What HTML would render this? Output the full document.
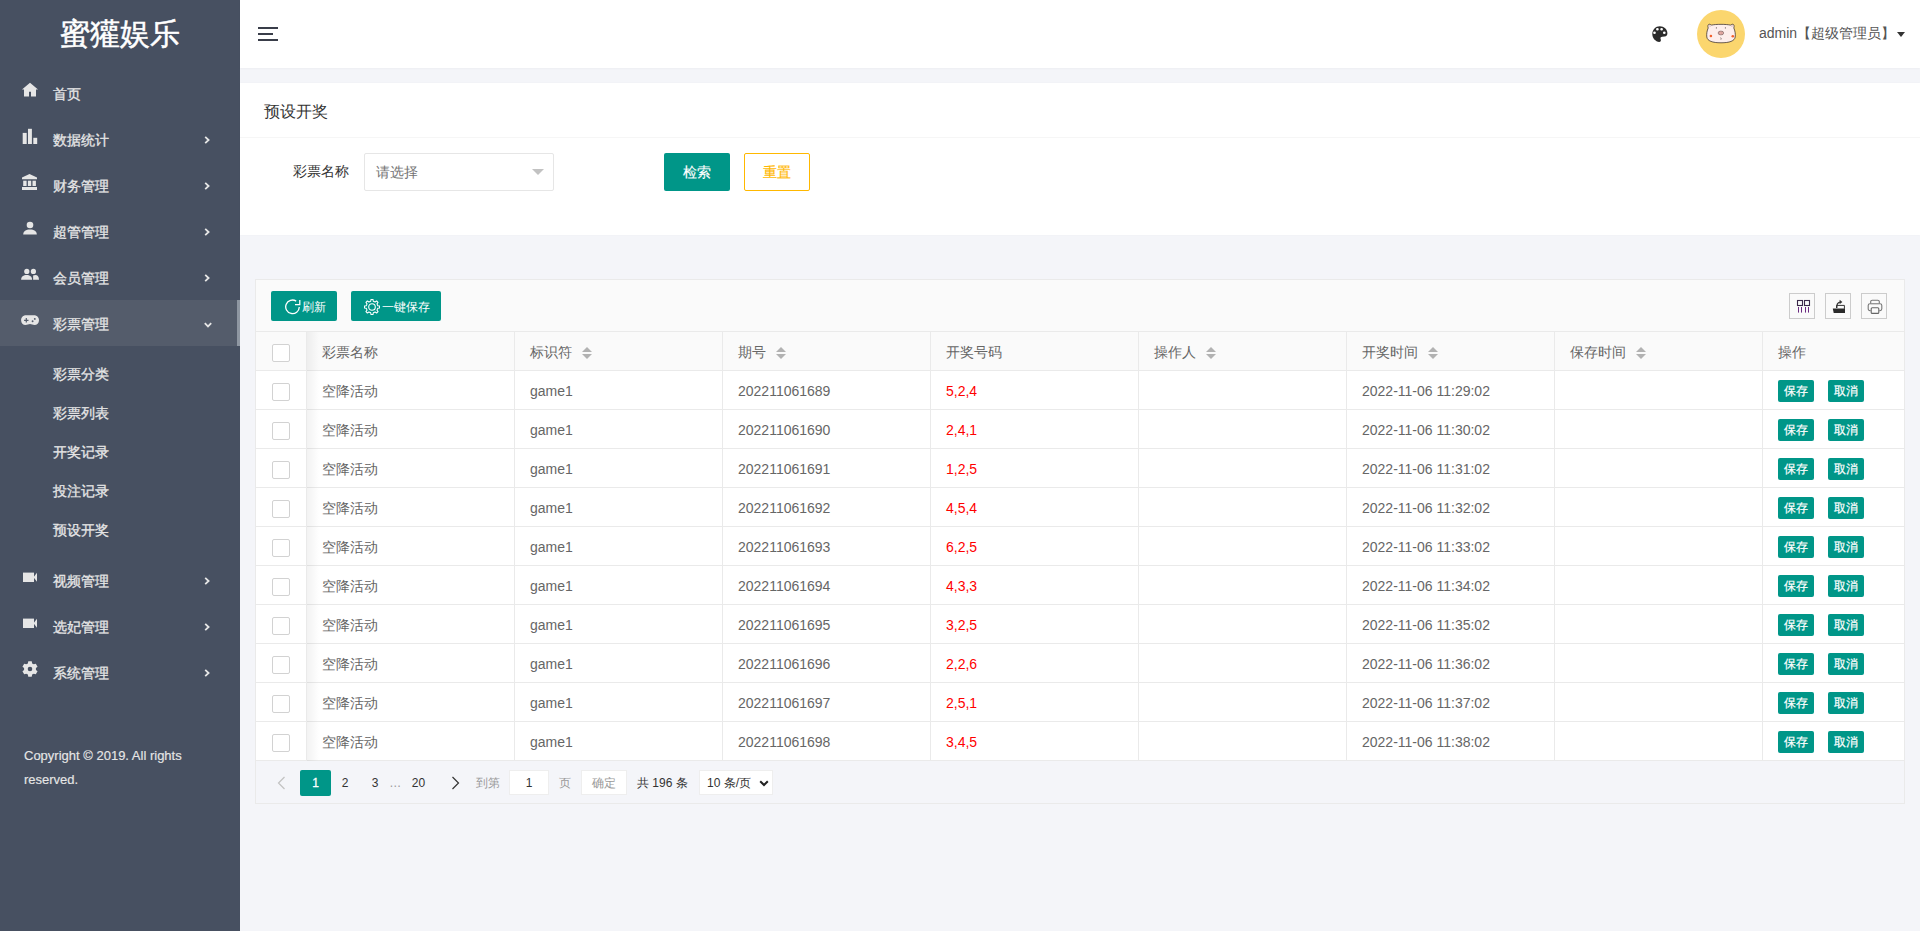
<!DOCTYPE html>
<html><head><meta charset="utf-8">
<style>
*{box-sizing:border-box;margin:0;padding:0}
html,body{width:1920px;height:931px;overflow:hidden}
body{background:#f4f5f9;font-family:"Liberation Sans",sans-serif;font-size:14px;color:#666;position:relative}
.abs{position:absolute}
i{display:block;font-style:normal}
#side{left:0;top:0;width:240px;height:931px;background:#475061}
#logo{left:0;top:10px;width:240px;text-align:center;color:#fff;font-size:30px;line-height:48px;-webkit-text-stroke:0.5px #fff}
.mi{left:0;width:240px;height:46px;color:#e6e6e6}
.mi .ic{position:absolute;left:22px;top:12px;width:16px;height:16px}
.mi .tx{position:absolute;left:53px;top:14px;line-height:20px;-webkit-text-stroke:0.3px #e6e6e6}
.mi .ar{position:absolute;left:204px;top:20px;width:6px;height:8px}
.mi .ard{position:absolute;left:203.5px;top:22px;width:8px;height:6px}
.mi.act{background:#545c6b}
.mi.act:after{content:"";position:absolute;right:0;top:0;width:3px;height:46px;background:#8f97a2}
.si{left:53px;color:#e6e6e6;line-height:20px;-webkit-text-stroke:0.3px #e6e6e6}
#copy{left:24px;top:744px;color:#e6e6e6;line-height:24px;font-size:13px;-webkit-text-stroke:0.15px #e6e6e6}
#hdr{left:240px;top:0;width:1680px;height:68px;background:#fff;box-shadow:0 1px 2px 0 rgba(0,0,0,.03)}
#hamb{left:18px;top:27px;width:20px;height:14px}
#hamb i{position:absolute;left:0;height:2px;background:#393d49}
#palette{left:1412px;top:26px;width:16px;height:16px}
#avatar{left:1457px;top:10px;width:48px;height:48px}
#uname{left:1519px;top:23px;line-height:20px;color:#555}
#caret{left:1657px;top:32px;width:0;height:0;border-left:4px solid transparent;border-right:4px solid transparent;border-top:5px solid #333}
#card1{left:240px;top:83px;width:1680px;height:152px;background:#fff;box-shadow:0 0 2px 0 rgba(0,0,0,.03)}
#c1title{left:24px;top:19px;font-size:16px;line-height:20px;color:#333}
#c1line{left:0;top:54px;width:1680px;height:1px;background:#f6f6f6}
#lbl{left:53px;top:78px;line-height:20px;color:#333}
#sel{left:124px;top:70px;width:190px;height:38px;border:1px solid #e6e6e6;border-radius:2px;background:#fff}
#sel span{position:absolute;left:11px;top:8px;line-height:20px;color:#757575}
#sel i{position:absolute;left:167px;top:15px;width:0;height:0;border-left:6px solid transparent;border-right:6px solid transparent;border-top:6px solid #c2c2c2}
#btnSearch{left:424px;top:70px;width:66px;height:38px;background:#009688;color:#fff;border-radius:2px;text-align:center;line-height:39px;-webkit-text-stroke:0.15px #fff}
#btnReset{left:504px;top:70px;width:66px;height:38px;border:1px solid #ffb800;color:#ffb800;border-radius:2px;text-align:center;line-height:37px;background:#fff;-webkit-text-stroke:0.15px #ffb800}
#card2{left:255px;top:279px;width:1650px;height:525px;border:1px solid #eaeaea;background:#fff}
#tbar{left:0;top:0;width:1648px;height:52px;background:#fafafa;border-bottom:1px solid #eaeaea}
.tbtn{top:11px;height:30px;background:#009688;color:#fff;border-radius:2px;font-size:12px;line-height:30px}
#bRefresh{left:15px;width:66px}
#bSave{left:95px;width:90px}
.tbtn .bic{position:absolute;left:14px;top:8px;width:16px;height:16px}
.tbtn .bgear{top:8px;left:13px}
.tbtn span{position:absolute;left:31px;top:1px}
.tool{top:13px;width:26px;height:26px;border:1px solid #ccc}
.tool svg{display:block;position:absolute;left:-1px;top:-1px}
#thead{left:0;top:52px;width:1648px;height:39px;background:#fafafa;border-bottom:1px solid #eaeaea}
.th,.td{top:0;height:38px;border-right:1px solid #eaeaea;padding:0 15px;line-height:40px;white-space:nowrap;overflow:hidden}
.th:last-child,.td:last-child{border-right:none}
.tr{left:0;width:1648px;height:39px;border-bottom:1px solid #eaeaea;background:#fff}
.cb{position:absolute;left:16px;top:12px;width:18px;height:18px;border:1px solid #d2d2d2;border-radius:2px;background:#fff}
.sort{display:inline-block;position:relative;width:10px;height:12px;margin-left:10px;vertical-align:-2px}
.sort:before{content:"";position:absolute;left:0;top:0;border-left:5px solid transparent;border-right:5px solid transparent;border-bottom:5px solid #b2b2b2}
.sort:after{content:"";position:absolute;left:0;top:7px;border-left:5px solid transparent;border-right:5px solid transparent;border-top:5px solid #b2b2b2}
.red{color:#ff0000}
.ob{position:absolute;-webkit-text-stroke:0.2px #fff;left:15px;top:9px;width:36px;height:22px;line-height:22px;background:#009688;color:#fff;border-radius:2px;text-align:center;font-size:12px}
.ob2{left:65px}
#fixshadow{left:51px;top:52px;width:12px;height:429px;background:linear-gradient(to right,rgba(0,0,0,.05),rgba(0,0,0,0))}
#pager{left:0;top:481px;width:1648px;height:42px;background:#f4f5f9;font-size:12px}
.pcur{left:44px;top:9px;width:31px;height:26px;background:#009688;color:#fff;border-radius:2px;text-align:center;line-height:26px}
.pnum{top:9px;width:20px;text-align:center;line-height:26px;color:#333}
.ptx{top:9px;line-height:26px;color:#999}
.ptx2{top:9px;line-height:26px;color:#333}
.pinp{left:253px;top:9px;width:40px;height:25px;background:#fff;border:1px solid #eee;text-align:center;line-height:24px;color:#333}
.pok{left:325px;top:9px;width:46px;height:25px;background:#fff;border:1px solid #eee;text-align:center;line-height:25px;color:#999}
.psel{left:443px;top:9px;width:74px;height:25px;background:#fff;border:1px solid #eee;line-height:24px;color:#333;padding-left:7px}

</style></head>
<body>
<div id="side" class="abs">
<div id="logo" class="abs">蜜獾娱乐</div>
<div class="mi abs" style="top:70px"><svg class="ic" viewBox="0 0 16 16"><path d="M8 0.8 L0 7.6 L2 7.6 L2 14.5 L7 14.5 L7 9.8 L9 9.8 L9 14.5 L14 14.5 L14 7.6 L16 7.6 Z" fill="currentColor"/></svg><span class="tx">首页</span></div>
<div class="mi abs" style="top:116px"><svg class="ic" viewBox="0 0 16 16"><rect x="0.7" y="4.9" width="4" height="11.1" fill="currentColor"/><rect x="6" y="0.8" width="3.9" height="15.2" fill="currentColor"/><rect x="11.3" y="9.8" width="3.9" height="6.2" fill="currentColor"/></svg><span class="tx">数据统计</span><svg class="ar" viewBox="0 0 6 8"><path d="M1.2 0.8 L4.6 4 L1.2 7.2" stroke="currentColor" stroke-width="1.8" fill="none"/></svg></div>
<div class="mi abs" style="top:162px"><svg class="ic" viewBox="0 0 16 16"><path d="M7.5 0 L0 3.6 L0 5.2 L15 5.2 L15 3.6 Z" fill="currentColor"/><rect x="1.2" y="6.7" width="3.4" height="5.3" fill="currentColor"/><rect x="5.9" y="6.7" width="3.3" height="5.3" fill="currentColor"/><rect x="10.5" y="6.7" width="3.4" height="5.3" fill="currentColor"/><rect x="0" y="13" width="15" height="3.1" fill="currentColor"/></svg><span class="tx">财务管理</span><svg class="ar" viewBox="0 0 6 8"><path d="M1.2 0.8 L4.6 4 L1.2 7.2" stroke="currentColor" stroke-width="1.8" fill="none"/></svg></div>
<div class="mi abs" style="top:208px"><svg class="ic" viewBox="0 0 16 16"><circle cx="8" cy="5" r="3.3" fill="currentColor"/><path d="M1.2 14.6 C1.2 11.2 4 9.5 8 9.5 C12 9.5 14.8 11.2 14.8 14.6 Z" fill="currentColor"/></svg><span class="tx">超管管理</span><svg class="ar" viewBox="0 0 6 8"><path d="M1.2 0.8 L4.6 4 L1.2 7.2" stroke="currentColor" stroke-width="1.8" fill="none"/></svg></div>
<div class="mi abs" style="top:254px"><svg class="ic" viewBox="0 0 16 16" style="overflow:visible"><circle cx="4.8" cy="5.4" r="2.6" fill="currentColor"/><circle cx="11.4" cy="5.4" r="2.6" fill="currentColor"/><path d="M-0.9 13.8 C-0.9 10.6 1.5 9 4.6 9 C7.7 9 10.1 10.6 10.1 13.8 Z" fill="currentColor"/><path d="M11.1 13.8 L11.1 9.6 C11.8 9.2 12.5 9 13.4 9 C15.6 9 17 10.6 17 13.8 Z" fill="currentColor"/></svg><span class="tx">会员管理</span><svg class="ar" viewBox="0 0 6 8"><path d="M1.2 0.8 L4.6 4 L1.2 7.2" stroke="currentColor" stroke-width="1.8" fill="none"/></svg></div>
<div class="mi abs act" style="top:300px"><svg class="ic" viewBox="0 0 16 16" style="overflow:visible"><path d="M4 3.3 H12 C15 3.3 17 5.5 17 8.2 C17 11 15 13 12.5 13 C10.8 13 9.5 12 8 12 C6.5 12 5.2 13 3.5 13 C1 13 -0.9 11 -0.9 8.2 C-0.9 5.5 1 3.3 4 3.3 Z" fill="currentColor"/><path d="M4.3 6.1 V10.5 M2.1 8.3 H6.5" stroke="#545c6b" stroke-width="1.2"/><circle cx="12.8" cy="6.9" r="0.95" fill="#545c6b"/><circle cx="10.6" cy="9.3" r="0.95" fill="#545c6b"/></svg><span class="tx">彩票管理</span><svg class="ard" viewBox="0 0 8 6"><path d="M0.8 1.2 L4 4.4 L7.2 1.2" stroke="currentColor" stroke-width="1.8" fill="none"/></svg></div>
<div class="mi abs" style="top:557px"><svg class="ic" viewBox="0 0 16 16"><rect x="1" y="3.6" width="11" height="9.4" fill="currentColor"/><path d="M11.5 8.3 L15 3.8 L15 12.8 Z" fill="currentColor"/></svg><span class="tx">视频管理</span><svg class="ar" viewBox="0 0 6 8"><path d="M1.2 0.8 L4.6 4 L1.2 7.2" stroke="currentColor" stroke-width="1.8" fill="none"/></svg></div>
<div class="mi abs" style="top:603px"><svg class="ic" viewBox="0 0 16 16"><rect x="1" y="3.6" width="11" height="9.4" fill="currentColor"/><path d="M11.5 8.3 L15 3.8 L15 12.8 Z" fill="currentColor"/></svg><span class="tx">选妃管理</span><svg class="ar" viewBox="0 0 6 8"><path d="M1.2 0.8 L4.6 4 L1.2 7.2" stroke="currentColor" stroke-width="1.8" fill="none"/></svg></div>
<div class="mi abs" style="top:649px"><svg class="ic" viewBox="0 0 16 16"><path fill="currentColor" fill-rule="evenodd" d="M5.89 2.38 L6.28 0.29 L9.72 0.29 L10.11 2.38 L11.81 3.36 L13.81 2.65 L15.54 5.64 L13.92 7.02 L13.92 8.98 L15.54 10.36 L13.81 13.35 L11.81 12.64 L10.11 13.62 L9.72 15.71 L6.28 15.71 L5.89 13.62 L4.19 12.64 L2.19 13.35 L0.46 10.36 L2.08 8.98 L2.08 7.02 L0.46 5.64 L2.19 2.65 L4.19 3.36 Z M8 5.7 A2.3 2.3 0 1 0 8 10.3 A2.3 2.3 0 1 0 8 5.7 Z"/></svg><span class="tx">系统管理</span><svg class="ar" viewBox="0 0 6 8"><path d="M1.2 0.8 L4.6 4 L1.2 7.2" stroke="currentColor" stroke-width="1.8" fill="none"/></svg></div>
<div class="si abs" style="top:364px">彩票分类</div>
<div class="si abs" style="top:403px">彩票列表</div>
<div class="si abs" style="top:442px">开奖记录</div>
<div class="si abs" style="top:481px">投注记录</div>
<div class="si abs" style="top:520px">预设开奖</div>
<div id="copy" class="abs">Copyright © 2019. All rights<br>reserved.</div>
</div>
<div id="hdr" class="abs">
<div id="hamb" class="abs"><i style="top:0;width:20px"></i><i style="top:6px;width:15px"></i><i style="top:12px;width:20px"></i></div>
<svg id="palette" class="abs" viewBox="0 0 16 16"><path fill="#2b2b2b" fill-rule="evenodd" d="M7.8 0.3 C12 0.3 15.4 3.4 15.4 7.3 C15.4 9 14.6 10.4 12.6 10.6 L10.2 10.7 C8.9 10.8 8.3 11.6 8.5 12.6 C8.6 13.1 8.9 13.5 8.9 14.2 C8.9 15.2 8.2 15.9 7.3 15.9 C3.4 15.6 0.3 12.2 0.3 8 C0.3 3.7 3.6 0.3 7.8 0.3 Z M5.4 1.9 A1.35 1.35 0 1 0 5.4 4.6 A1.35 1.35 0 1 0 5.4 1.9 Z M9.6 1.9 A1.35 1.35 0 1 0 9.6 4.6 A1.35 1.35 0 1 0 9.6 1.9 Z M2.5 5.4 A1.35 1.35 0 1 0 2.5 8.1 A1.35 1.35 0 1 0 2.5 5.4 Z M12.3 5.4 A1.35 1.35 0 1 0 12.3 8.1 A1.35 1.35 0 1 0 12.3 5.4 Z"/></svg>
<svg id="avatar" class="abs" viewBox="0 0 48 48"><circle cx="24" cy="24" r="24" fill="#fbd66e"/>
<path d="M11.2 18 C10.6 16.2 10.8 14.6 12.2 14.2 L14.6 15.1 C18.5 14.1 29.5 14.1 33.4 15.1 L35.8 14.2 C37.2 14.6 37.4 16.2 36.8 18 C38 20.5 38.6 24 38.2 27 C37.6 31 32.5 32.8 24 32.8 C15.5 32.8 10.4 31 9.8 27 C9.4 24 10 20.5 11.2 18 Z" fill="#fdeeec" stroke="#2a1f1f" stroke-width="0.7"/>
<path d="M12.3 15.4 L13.4 17 M35.7 15.4 L34.6 17" stroke="#e8b8b0" stroke-width="1"/>
<ellipse cx="23.9" cy="23" rx="2.8" ry="1.9" fill="#f4b9b2" stroke="#3a2a2a" stroke-width="0.45"/>
<path d="M22.9 22.4 V23.6 M24.9 22.4 V23.6" stroke="#6a3a3a" stroke-width="0.5"/>
<circle cx="13.9" cy="26" r="1.3" fill="#f3602c"/><circle cx="35.8" cy="26.2" r="1.3" fill="#f3602c"/>
<path d="M19.4 17.2 V18.6 M28.4 17.2 V18.6" stroke="#3a2a2a" stroke-width="0.6"/>
<path d="M23.6 27.6 Q24.5 28.5 23.9 29.6" stroke="#3a2a2a" stroke-width="0.6" fill="none"/>
</svg>
<div id="uname" class="abs">admin【超级管理员】</div>
<div id="caret" class="abs"></div>
</div>
<div id="card1" class="abs">
<div id="c1title" class="abs">预设开奖</div>
<div id="c1line" class="abs"></div>
<div id="lbl" class="abs">彩票名称</div>
<div id="sel" class="abs"><span>请选择</span><i></i></div>
<div id="btnSearch" class="abs">检索</div>
<div id="btnReset" class="abs">重置</div>
</div>
<div id="card2" class="abs">
<div id="tbar" class="abs"><div id="bRefresh" class="abs tbtn"><svg class="bic" viewBox="0 0 16 16"><path d="M14.3 8 A6.8 6.8 0 1 1 11.2 2.1" stroke="#fff" stroke-width="1.3" fill="none"/><path d="M14.8 1 V5.7 H10" stroke="#fff" stroke-width="1.3" fill="none"/></svg><span>刷新</span></div><div id="bSave" class="abs tbtn"><svg class="bic bgear" viewBox="0 0 16 16"><path fill="none" stroke="#fff" stroke-width="1.05" stroke-linejoin="round" d="M6.71 2.24 L7.01 0.46 L8.99 0.46 L9.29 2.24 L11.16 3.02 L12.63 1.97 L14.03 3.37 L12.98 4.84 L13.76 6.71 L15.54 7.01 L15.54 8.99 L13.76 9.29 L12.98 11.16 L14.03 12.63 L12.63 14.03 L11.16 12.98 L9.29 13.76 L8.99 15.54 L7.01 15.54 L6.71 13.76 L4.84 12.98 L3.37 14.03 L1.97 12.63 L3.02 11.16 L2.24 9.29 L0.46 8.99 L0.46 7.01 L2.24 6.71 L3.02 4.84 L1.97 3.37 L3.37 1.97 L4.84 3.02 Z"/><circle cx="8" cy="8" r="3.3" fill="none" stroke="#fff" stroke-width="1.1"/></svg><span>一键保存</span></div><div class="tool abs" style="left:1533px"><svg viewBox="0 0 26 26" width="26" height="26"><rect x="8.5" y="7.5" width="5" height="5" fill="none" stroke="#3a2a4a" stroke-width="1.1"/><rect x="15.5" y="7.5" width="5" height="5" fill="none" stroke="#3a2a4a" stroke-width="1.1"/><path d="M9.5 14 V19.6 M12.5 14 V19.6 M16.5 14 V19.6 M19.5 14 V19.6" stroke="#6a2a80" stroke-width="1"/></svg></div>
<div class="tool abs" style="left:1569px"><svg viewBox="0 0 26 26" width="26" height="26"><path d="M11.5 15 V12.4 H19.4 V15.8" fill="none" stroke="#333" stroke-width="1"/><path d="M7.8 15.6 H20 V20 H8.7 Z" fill="#2a2a2a"/><path d="M11.8 15 C11.6 11.5 12.6 9.6 15 9.2" fill="none" stroke="#333" stroke-width="1.3"/><path d="M14.6 6.8 L17.4 9 L14.6 11.2 Z" fill="#333"/></svg></div>
<div class="tool abs" style="left:1605px"><svg viewBox="0 0 26 26" width="26" height="26"><path d="M9.7 10.5 V8.6 C9.7 7.7 10.3 7.2 11.2 7.2 H16.8 C17.7 7.2 18.3 7.7 18.3 8.6 V10.5" fill="none" stroke="#777" stroke-width="1.1"/><path d="M9.6 17.6 H9 C7.9 17.6 7.2 16.9 7.2 15.8 V12.6 C7.2 11.5 7.9 10.8 9 10.8 H19 C20.1 10.8 20.8 11.5 20.8 12.6 V15.8 C20.8 16.9 20.1 17.6 19 17.6 H18.4" fill="none" stroke="#777" stroke-width="1.1"/><path d="M10 10.6 H18" stroke="#999" stroke-width="1"/><rect x="10.2" y="14.8" width="7.6" height="5.6" rx="1" fill="#fafafa" stroke="#666" stroke-width="1.1"/></svg></div>
<div id="thead" class="abs"><div class="th abs" style="left:0px;width:51px"><i class="cb"></i></div><div class="th abs" style="left:51px;width:208px"><span>彩票名称</span></div><div class="th abs" style="left:259px;width:208px"><span>标识符</span><i class="sort"></i></div><div class="th abs" style="left:467px;width:208px"><span>期号</span><i class="sort"></i></div><div class="th abs" style="left:675px;width:208px"><span>开奖号码</span></div><div class="th abs" style="left:883px;width:208px"><span>操作人</span><i class="sort"></i></div><div class="th abs" style="left:1091px;width:208px"><span>开奖时间</span><i class="sort"></i></div><div class="th abs" style="left:1299px;width:208px"><span>保存时间</span><i class="sort"></i></div><div class="th abs" style="left:1507px;width:141px"><span>操作</span></div></div>
<div class="tr abs" style="top:91px"><div class="td abs" style="left:0px;width:51px"><i class="cb"></i></div><div class="td abs" style="left:51px;width:208px">空降活动</div><div class="td abs" style="left:259px;width:208px">game1</div><div class="td abs" style="left:467px;width:208px">202211061689</div><div class="td abs red" style="left:675px;width:208px">5,2,4</div><div class="td abs" style="left:883px;width:208px"></div><div class="td abs" style="left:1091px;width:208px">2022-11-06 11:29:02</div><div class="td abs" style="left:1299px;width:208px"></div><div class="td abs" style="left:1507px;width:141px"><span class="ob">保存</span><span class="ob ob2">取消</span></div></div>
<div class="tr abs" style="top:130px"><div class="td abs" style="left:0px;width:51px"><i class="cb"></i></div><div class="td abs" style="left:51px;width:208px">空降活动</div><div class="td abs" style="left:259px;width:208px">game1</div><div class="td abs" style="left:467px;width:208px">202211061690</div><div class="td abs red" style="left:675px;width:208px">2,4,1</div><div class="td abs" style="left:883px;width:208px"></div><div class="td abs" style="left:1091px;width:208px">2022-11-06 11:30:02</div><div class="td abs" style="left:1299px;width:208px"></div><div class="td abs" style="left:1507px;width:141px"><span class="ob">保存</span><span class="ob ob2">取消</span></div></div>
<div class="tr abs" style="top:169px"><div class="td abs" style="left:0px;width:51px"><i class="cb"></i></div><div class="td abs" style="left:51px;width:208px">空降活动</div><div class="td abs" style="left:259px;width:208px">game1</div><div class="td abs" style="left:467px;width:208px">202211061691</div><div class="td abs red" style="left:675px;width:208px">1,2,5</div><div class="td abs" style="left:883px;width:208px"></div><div class="td abs" style="left:1091px;width:208px">2022-11-06 11:31:02</div><div class="td abs" style="left:1299px;width:208px"></div><div class="td abs" style="left:1507px;width:141px"><span class="ob">保存</span><span class="ob ob2">取消</span></div></div>
<div class="tr abs" style="top:208px"><div class="td abs" style="left:0px;width:51px"><i class="cb"></i></div><div class="td abs" style="left:51px;width:208px">空降活动</div><div class="td abs" style="left:259px;width:208px">game1</div><div class="td abs" style="left:467px;width:208px">202211061692</div><div class="td abs red" style="left:675px;width:208px">4,5,4</div><div class="td abs" style="left:883px;width:208px"></div><div class="td abs" style="left:1091px;width:208px">2022-11-06 11:32:02</div><div class="td abs" style="left:1299px;width:208px"></div><div class="td abs" style="left:1507px;width:141px"><span class="ob">保存</span><span class="ob ob2">取消</span></div></div>
<div class="tr abs" style="top:247px"><div class="td abs" style="left:0px;width:51px"><i class="cb"></i></div><div class="td abs" style="left:51px;width:208px">空降活动</div><div class="td abs" style="left:259px;width:208px">game1</div><div class="td abs" style="left:467px;width:208px">202211061693</div><div class="td abs red" style="left:675px;width:208px">6,2,5</div><div class="td abs" style="left:883px;width:208px"></div><div class="td abs" style="left:1091px;width:208px">2022-11-06 11:33:02</div><div class="td abs" style="left:1299px;width:208px"></div><div class="td abs" style="left:1507px;width:141px"><span class="ob">保存</span><span class="ob ob2">取消</span></div></div>
<div class="tr abs" style="top:286px"><div class="td abs" style="left:0px;width:51px"><i class="cb"></i></div><div class="td abs" style="left:51px;width:208px">空降活动</div><div class="td abs" style="left:259px;width:208px">game1</div><div class="td abs" style="left:467px;width:208px">202211061694</div><div class="td abs red" style="left:675px;width:208px">4,3,3</div><div class="td abs" style="left:883px;width:208px"></div><div class="td abs" style="left:1091px;width:208px">2022-11-06 11:34:02</div><div class="td abs" style="left:1299px;width:208px"></div><div class="td abs" style="left:1507px;width:141px"><span class="ob">保存</span><span class="ob ob2">取消</span></div></div>
<div class="tr abs" style="top:325px"><div class="td abs" style="left:0px;width:51px"><i class="cb"></i></div><div class="td abs" style="left:51px;width:208px">空降活动</div><div class="td abs" style="left:259px;width:208px">game1</div><div class="td abs" style="left:467px;width:208px">202211061695</div><div class="td abs red" style="left:675px;width:208px">3,2,5</div><div class="td abs" style="left:883px;width:208px"></div><div class="td abs" style="left:1091px;width:208px">2022-11-06 11:35:02</div><div class="td abs" style="left:1299px;width:208px"></div><div class="td abs" style="left:1507px;width:141px"><span class="ob">保存</span><span class="ob ob2">取消</span></div></div>
<div class="tr abs" style="top:364px"><div class="td abs" style="left:0px;width:51px"><i class="cb"></i></div><div class="td abs" style="left:51px;width:208px">空降活动</div><div class="td abs" style="left:259px;width:208px">game1</div><div class="td abs" style="left:467px;width:208px">202211061696</div><div class="td abs red" style="left:675px;width:208px">2,2,6</div><div class="td abs" style="left:883px;width:208px"></div><div class="td abs" style="left:1091px;width:208px">2022-11-06 11:36:02</div><div class="td abs" style="left:1299px;width:208px"></div><div class="td abs" style="left:1507px;width:141px"><span class="ob">保存</span><span class="ob ob2">取消</span></div></div>
<div class="tr abs" style="top:403px"><div class="td abs" style="left:0px;width:51px"><i class="cb"></i></div><div class="td abs" style="left:51px;width:208px">空降活动</div><div class="td abs" style="left:259px;width:208px">game1</div><div class="td abs" style="left:467px;width:208px">202211061697</div><div class="td abs red" style="left:675px;width:208px">2,5,1</div><div class="td abs" style="left:883px;width:208px"></div><div class="td abs" style="left:1091px;width:208px">2022-11-06 11:37:02</div><div class="td abs" style="left:1299px;width:208px"></div><div class="td abs" style="left:1507px;width:141px"><span class="ob">保存</span><span class="ob ob2">取消</span></div></div>
<div class="tr abs" style="top:442px"><div class="td abs" style="left:0px;width:51px"><i class="cb"></i></div><div class="td abs" style="left:51px;width:208px">空降活动</div><div class="td abs" style="left:259px;width:208px">game1</div><div class="td abs" style="left:467px;width:208px">202211061698</div><div class="td abs red" style="left:675px;width:208px">3,4,5</div><div class="td abs" style="left:883px;width:208px"></div><div class="td abs" style="left:1091px;width:208px">2022-11-06 11:38:02</div><div class="td abs" style="left:1299px;width:208px"></div><div class="td abs" style="left:1507px;width:141px"><span class="ob">保存</span><span class="ob ob2">取消</span></div></div>
<div id="fixshadow" class="abs"></div><div id="pager" class="abs">
<svg class="abs" style="left:20px;top:15px" width="10" height="14" viewBox="0 0 10 14"><path d="M8.5 1 L2.5 7 L8.5 13" stroke="#c2c2c2" stroke-width="1.2" fill="none"/></svg>
<div class="abs pcur" style="-webkit-text-stroke:0.3px #fff">1</div>
<div class="abs pnum" style="left:79px">2</div>
<div class="abs pnum" style="left:109px">3</div>
<div class="abs pnum" style="left:129.2px;color:#999">…</div>
<div class="abs pnum" style="left:152.5px">20</div>
<svg class="abs" style="left:195px;top:15px" width="10" height="14" viewBox="0 0 10 14"><path d="M1.5 1 L7.5 7 L1.5 13" stroke="#333" stroke-width="1.2" fill="none"/></svg>
<div class="abs ptx" style="left:219.6px">到第</div>
<div class="abs pinp">1</div>
<div class="abs ptx" style="left:303px">页</div>
<div class="abs pok">确定</div>
<div class="abs ptx2" style="left:381px">共 196 条</div>
<div class="abs psel">10 条/页<svg class="abs" style="left:59px;top:9px" width="10" height="7" viewBox="0 0 10 7"><path d="M1.2 1.2 L5 5 L8.8 1.2" stroke="#222" stroke-width="2" fill="none"/></svg></div>
</div>
</div>
</body></html>
